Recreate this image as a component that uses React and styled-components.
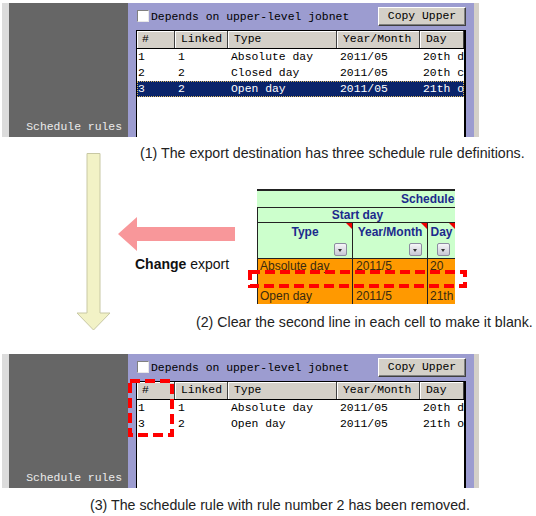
import React from 'react';
import styled, { createGlobalStyle } from 'styled-components';

const GlobalStyle = createGlobalStyle`
  body {
    margin: 0;
    background: #fff;
  }
`;

const mono = `"Liberation Mono", "Courier New", monospace`;
const sans = `"Liberation Sans", Arial, sans-serif`;

const Page = styled.div`
  width: 536px;
  height: 516px;
  overflow: hidden;
  font-family: ${sans};
  color: #222;
`;

// ---------- job panel ----------
const Panel = styled.div`
  position: relative;
  display: flex;
  width: 477px;
  height: 134px;
  margin: ${p => p.$top}px 0 0 2px;
`;

const Edge = styled.div`
  width: 7px;
  background: #dcdcdc;
`;

const Side = styled.div`
  width: 119px;
  box-sizing: border-box;
  background: #666666;
  display: flex;
  align-items: flex-end;
  justify-content: flex-end;
  padding: 0 6px 2px 0;
  color: #ececec;
  font: 11.4px/16px ${mono};
`;

const Main = styled.div`
  flex: 1;
  display: flex;
  flex-direction: column;
  padding: 0 8px;
  background: #9c9cd0;
`;

const RightStrip = styled.div`
  width: 5px;
  background: #d4d0c8;
`;

const TopBar = styled.div`
  height: 27px;
  display: flex;
  align-items: flex-start;
  font: 11.4px/14px ${mono};
  color: #000;
`;

const Check = styled.span`
  width: 10px;
  height: 10px;
  margin: 7px 2px 0 1px;
  background: #fff;
  border: 1px solid;
  border-color: #808080 #e8e8e8 #e8e8e8 #808080;
`;

const CheckLabel = styled.span`
  margin-top: 7px;
`;

const Button = styled.div`
  margin: 4px 0 0 auto;
  width: 88px;
  height: 19px;
  box-sizing: border-box;
  background: #d4d0c8;
  border: 1px solid;
  border-color: #fff #404040 #404040 #fff;
  box-shadow: inset -1px -1px 0 #808080;
  text-align: center;
  line-height: 17px;
`;

const List = styled.div`
  flex: 1;
  background: #fff;
  border: 1px solid #000;
  border-bottom: none;
  border-right-width: 2px;
  font: 11.4px ${mono};
  color: #000;
  overflow: hidden;
`;

const cols = '38px 53px 109px 83px 1fr';

const HeadRow = styled.div`
  display: grid;
  grid-template-columns: ${cols};
  height: 17px;
  border-bottom: 1px solid #000;
`;

const HeadCell = styled.div`
  background: #d4d0c8;
  border-right: 1px solid #404040;
  box-shadow: inset 1px 1px 0 #fff;
  padding-left: ${p => (p.$first ? 5 : 6)}px;
  line-height: 17px;
  white-space: nowrap;
`;

const Row = styled.div`
  display: grid;
  grid-template-columns: ${cols};
  height: 16px;
  box-sizing: border-box;
  line-height: 16px;
  background: ${p => (p.$selected ? '#0a246a' : '#fff')};
  color: ${p => (p.$selected ? '#fff' : '#000')};
  outline: ${p => (p.$selected ? '1px dotted #d8b860' : 'none')};
  outline-offset: -1px;
`;

const Cell = styled.div`
  padding-left: ${p => (p.$first ? 1 : 3)}px;
  white-space: nowrap;
`;

// ---------- dashed marker ----------
const Marker = styled.svg`
  position: absolute;
  left: ${p => p.$left}px;
  top: ${p => p.$top}px;
  overflow: visible;
`;

const DashBox = ({ left, top, w, h }) => (
  <Marker $left={left} $top={top} width={w} height={h}>
    <rect
      x="2"
      y="2"
      width={w - 4}
      height={h - 4}
      fill="none"
      stroke="#ff0000"
      strokeWidth="4"
      strokeDasharray="10 5"
    />
  </Marker>
);

const JobPanel = ({ top, rows, selected, children }) => (
  <Panel $top={top}>
    <Edge />
    <Side>Schedule rules</Side>
    <Main>
      <TopBar>
        <Check />
        <CheckLabel>Depends on upper-level jobnet</CheckLabel>
        <Button>Copy Upper</Button>
      </TopBar>
      <List>
        <HeadRow>
          <HeadCell $first>#</HeadCell>
          <HeadCell>Linked</HeadCell>
          <HeadCell>Type</HeadCell>
          <HeadCell>Year/Month</HeadCell>
          <HeadCell>Day</HeadCell>
        </HeadRow>
        {rows.map((r, i) => (
          <Row key={i} $selected={i === selected}>
            {r.map((c, j) => (
              <Cell key={j} $first={j === 0}>{c}</Cell>
            ))}
          </Row>
        ))}
      </List>
    </Main>
    <RightStrip />
    {children}
  </Panel>
);

// ---------- middle part ----------
const Middle = styled.div`
  display: flex;
  height: 217px;
`;

const DownCol = styled.div`
  flex: 0 0 118px;
  box-sizing: border-box;
  padding: 16px 0 0 76px;
`;

const RightCol = styled.div`
  flex: 1;
  display: flex;
  flex-direction: column;
`;

const Caption = styled.div`
  margin-top: ${p => p.$mt}px;
  padding-left: ${p => p.$pl}px;
  font-size: 14.2px;
  line-height: 16px;
  white-space: nowrap;
  color: #222;
`;

const SheetRow = styled.div`
  display: flex;
  margin-top: 28px;
`;

const ChangeBlock = styled.div`
  flex: 0 0 139px;
  display: flex;
  flex-direction: column;
  padding-top: 28px;
`;

const ChangeText = styled.div`
  margin: 4px 0 0 17px;
  font-size: 14px;
  line-height: 16px;
  color: #111;
  b {
    font-weight: bold;
  }
`;

// ---------- spreadsheet ----------
const Sheet = styled.div`
  position: relative;
  width: 198px;
  font-family: ${sans};
  font-size: 12px;
`;

const SheetTitle = styled.div`
  height: 16px;
  border-top: 2px solid #222;
  border-bottom: 1px solid #222;
  background: #ccffcc;
  padding-left: 144px;
  line-height: 17px;
  font-weight: bold;
  color: #1c2a8c;
  white-space: nowrap;
`;

const SubTitle = styled.div`
  height: 14px;
  border-left: 1px solid #222;
  border-bottom: 1px solid #222;
  background: #ccffcc;
  text-align: center;
  line-height: 15px;
  font-weight: bold;
  color: #1c2a8c;
  padding-left: 2px;
`;

const sheetCols = '95px 75px 28px';

const SheetHead = styled.div`
  display: grid;
  grid-template-columns: ${sheetCols};
`;

const SheetHeadCell = styled.div`
  position: relative;
  height: 33px;
  border-left: 1px solid #222;
  border-bottom: 1px solid #222;
  background: #ccffcc;
  text-align: center;
  padding-top: 2px;
  line-height: 15px;
  font-weight: bold;
  color: #1c2a8c;
  white-space: nowrap;
  &::after {
    content: '';
    position: absolute;
    top: 0;
    right: 0;
    border-top: 6px solid #ee0000;
    border-left: 6px solid transparent;
  }
`;

const DropBtn = styled.span`
  position: absolute;
  right: 5px;
  bottom: 2px;
  width: 11px;
  height: 11px;
  border: 1px solid #8c8ca0;
  border-radius: 2px;
  background: linear-gradient(#f6f6f8, #c8c8d4);
  &::after {
    content: '';
    position: absolute;
    left: 3px;
    top: 5px;
    border-top: 3px solid #333;
    border-left: 2.5px solid transparent;
    border-right: 2.5px solid transparent;
  }
`;

const SheetBody = styled.div`
  display: grid;
  grid-template-columns: ${sheetCols};
`;

const DataCell = styled.div`
  height: 45px;
  border-left: 1px solid #222;
  background: #ff9900;
  padding-left: ${p => p.$pl}px;
  line-height: 15px;
  color: #3a2a10;
  white-space: pre;
`;

const topRows = [
  ['1', '1', 'Absolute day', '2011/05', '20th d'],
  ['2', '2', 'Closed day', '2011/05', '20th c'],
  ['3', '2', 'Open day', '2011/05', '21th o'],
];

const bottomRows = [
  ['1', '1', 'Absolute day', '2011/05', '20th d'],
  ['3', '2', 'Open day', '2011/05', '21th o'],
];

export default function App() {
  return (
    <Page>
      <GlobalStyle />
      <JobPanel top={3} rows={topRows} selected={2} />

      <Middle>
        <DownCol>
          <svg width="36" height="180">
            <polygon
              points="11,0.5 24,0.5 24,160 34,160 17.5,177 1,160 11,160"
              fill="#f2f2c6"
              stroke="#c8c8a4"
              strokeWidth="1"
            />
          </svg>
        </DownCol>
        <RightCol>
          <Caption $mt={8} $pl={22}>
            (1) The export destination has three schedule rule definitions.
          </Caption>
          <SheetRow>
            <ChangeBlock>
              <svg width="118" height="35">
                <polygon points="0,17 19,0 19,10 117,10 117,24 19,24 19,34" fill="#f8979a" />
              </svg>
              <ChangeText>
                <b>Change</b> export
              </ChangeText>
            </ChangeBlock>
            <Sheet>
              <SheetTitle>Schedule</SheetTitle>
              <SubTitle>Start day</SubTitle>
              <SheetHead>
                <SheetHeadCell>Type<DropBtn /></SheetHeadCell>
                <SheetHeadCell>Year/Month<DropBtn /></SheetHeadCell>
                <SheetHeadCell>Day<DropBtn /></SheetHeadCell>
              </SheetHead>
              <SheetBody>
                <DataCell $pl={2}>{'Absolute day\n\nOpen day'}</DataCell>
                <DataCell $pl={3}>{'2011/5\n\n2011/5'}</DataCell>
                <DataCell $pl={2}>{'20\n\n21th'}</DataCell>
              </SheetBody>
              <DashBox left={-9} top={81} w={219} h={18} />
            </Sheet>
          </SheetRow>
          <Caption $mt={10} $pl={78}>
            (2) Clear the second line in each cell to make it blank.
          </Caption>
        </RightCol>
      </Middle>

      <JobPanel top={0} rows={bottomRows}>
        <DashBox left={126} top={25} w={46} h={58} />
      </JobPanel>

      <Caption $mt={9} $pl={90}>
        (3) The schedule rule with rule number 2 has been removed.
      </Caption>
    </Page>
  );
}
